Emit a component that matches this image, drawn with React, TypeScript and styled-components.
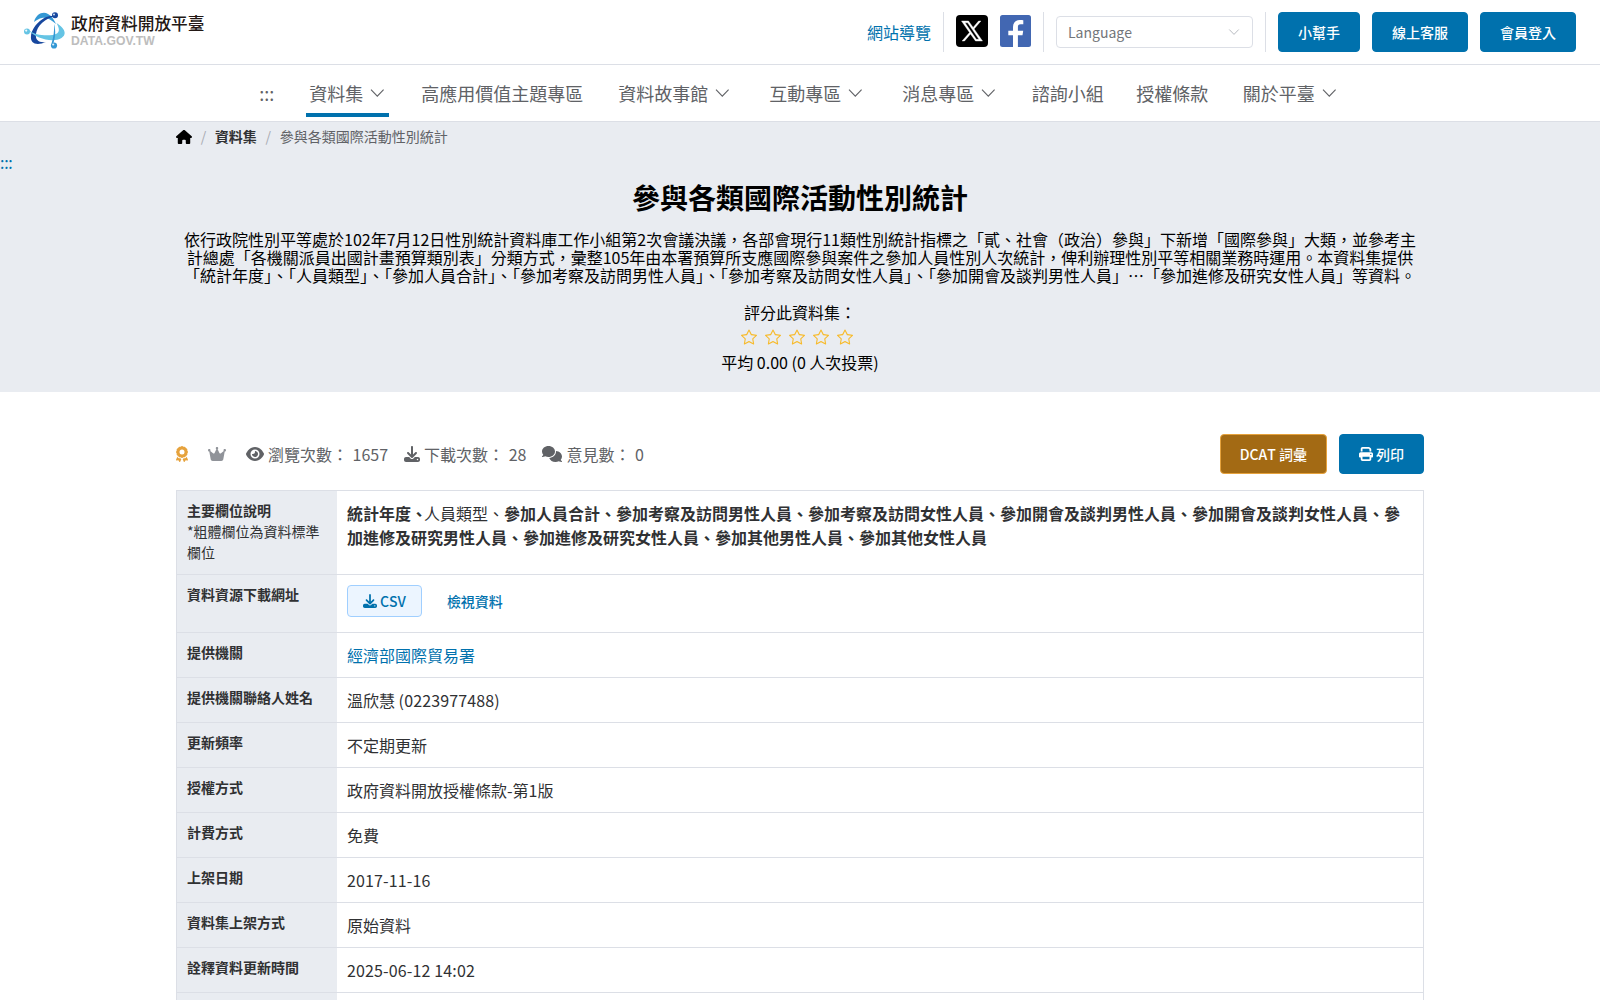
import React from "react";
import styled, { createGlobalStyle } from "styled-components";
import { FaAward, FaCrown, FaEye, FaDownload, FaComments, FaPrint, FaHouse } from "react-icons/fa6";
import { BsStar } from "react-icons/bs";

const Global = createGlobalStyle`
  * { box-sizing: border-box; }
  body { margin: 0; background: #fff; color: #303133; font: 16px/1.5 "Noto Sans CJK TC", sans-serif; font-kerning: none; overflow: hidden; }
  #root { height: 1000px; overflow: hidden; }
  a { color: #0071ad; text-decoration: none; }
`;

const TopBar = styled.header`
  display: flex; justify-content: space-between; align-items: center;
  height: 65px; padding: 0 24px; border-bottom: 1px solid #dcdfe6;
`;
const Brand = styled.a`display: flex; align-items: center; gap: 6px; padding-bottom: 2px;`;
const BrandText = styled.span`display: flex; flex-direction: column; padding-bottom: 1px;`;
const BrandName = styled.span`font-size: 16.7px; line-height: 20px; font-weight: 500; color: #231815;`;
const BrandHost = styled.span`font: bold 12.2px/16px "Liberation Sans", Arial, sans-serif; font-kerning: normal; color: #bdbdbd;`;
const Tools = styled.div`display: flex; align-items: center; gap: 12px;`;
const Divider = styled.i`width: 1px; height: 40px; background: #dcdfe6;`;
const SiteMap = styled.a`font-size: 16px;`;
const Social = styled.div`display: flex; align-items: center; gap: 12px; padding-bottom: 2px; svg { display: block; }`;
const Select = styled.div`
  display: flex; align-items: center; justify-content: space-between; width: 197px; height: 32px;
  padding: 0 12px 0 11px; border: 1px solid #dcdfe6; border-radius: 4px; font-size: 14px; color: #73767a;
`;
const Button = styled.button<{ $tone?: "brown" | "blue" }>`
  display: inline-flex; align-items: center; gap: 3px; height: 40px; padding: 0 19px;
  font: 500 14px/1 "Noto Sans CJK TC", sans-serif; font-kerning: none; color: #fff; border-radius: 4px;
  background: ${p => (p.$tone === "brown" ? "#a36a14" : "#0071ad")};
  border: 1px solid ${p => (p.$tone === "brown" ? "#e6a23c" : "#0071ad")};
`;

const Nav = styled.nav`
  display: flex; justify-content: center; height: 57px; padding-right: 3px; border-bottom: 1px solid #dcdfe6;
`;
const NavItem = styled.a<{ $active?: boolean; $left?: number }>`
  display: flex; align-items: center; gap: 7px; height: 52px; padding: 9px 3px 0; margin-left: ${p => p.$left ?? 0}px;
  font-size: 18px; line-height: 27px; color: #606266; border-bottom: 4px solid ${p => (p.$active ? "#0071ad" : "transparent")};
`;

const Hero = styled.section`height: 270px; background: #e9ecf1; color: #000; text-align: center;`;
const Container = styled.div`width: 1248px; margin: 0 auto;`;
const Crumbs = styled(Container)`display: flex; align-items: center; height: 29px; font-size: 14px; color: #606266;`;
const Slash = styled.span`margin: 0 8.7px; color: #a8abb2;`;
const CrumbLink = styled.b`color: #303133;`;
const Anchor = styled.a`display: block; height: 24px; line-height: 22px; text-align: left; letter-spacing: -0.3px;`;
const Title = styled.h1`margin: 4px 0 15px; font-size: 28px; line-height: 36px; font-weight: 700;`;
const Description = styled.p`width: 1248px; margin: 0 auto; padding: 0 8px; font-size: 16px; line-height: 18px;`;
const RateLabel = styled.div`margin-top: 16px; line-height: 24px;`;
const Stars = styled.div`display: flex; justify-content: center; gap: 8px; height: 26px; align-items: center; padding: 0 6px 1px 0; color: #f7ba2a;`;

const Meta = styled(Container)`display: flex; justify-content: space-between; align-items: center; padding: 42px 0 16px;`;
const Stats = styled.div`display: flex; align-items: center; gap: 16px; color: #606266;`;
const Stat = styled.span`display: inline-flex; align-items: center; gap: 4px; white-space: pre; word-spacing: 1px;`;
const StatIcon = styled.span<{ $width: number }>`display: flex; svg { width: ${p => p.$width}px; height: 16px; }`;
const Badge = styled(StatIcon)<{ $color: string }>`color: ${p => p.$color}; margin-right: 4px;`;
const Actions = styled.div`display: flex; gap: 12px;`;

const Table = styled(Container)`border: 1px solid #dcdfe6; border-bottom: 0;`;
const Row = styled.div`display: flex; border-bottom: 1px solid #dcdfe6;`;
const Label = styled.div`flex: 0 0 160px; padding: 9px 10px 11px; background: #e9ecf1; font-size: 14px; line-height: 21px;`;
const Value = styled.div`flex: 1; padding: 10px; line-height: 24px;`;
const Latin = styled.span`letter-spacing: 0.14px;`;
const LeadField = styled.b`margin-right: -3px;`;
const Files = styled.div`display: flex; gap: 10px; margin-bottom: 5px;`;
const FileButton = styled.a<{ $plain?: boolean }>`
  display: inline-flex; align-items: center; gap: 3px; height: 32px; padding: 0 15px 1px; font-size: 14px; font-weight: 500;
  border-radius: 4px; ${p => (p.$plain ? "" : "border: 1px solid #a0cfff; background: #ecf5ff;")}
`;

const Chevron = ({ size = 16, color = "#606266" }: { size?: number; color?: string }) => (
  <svg width={size} height={size} viewBox="0 0 16 16" fill="none" stroke={color} strokeWidth="1.1">
    <path d={size === 16 ? "M1 3.700 7.300 10.200 13.600 3.700" : "M1.700 4.700 8 11.200 14.300 4.700"} />
  </svg>
);

const Logo = () => (
  <svg width="41" height="38" viewBox="0 0 41 38">
    <path d="M10 10C12 2 19-1 24 2c4 2 6 6 8 10-5-4-9-7-14-6-3 .5-5 2-8 4Z" fill="#3498d4" />
    <path d="M32 4C20 2 8 14 7 24c-1 8 6 10 15 6-7 1-11-2-10-8C13 14 21 6 32 4Z" fill="#17479e" />
    <path d="M4.500 20c6 5 16 6 24 5 7-1 8-5 4-12 8 5 11 11 5 15-8 5-26 1-33-8Z" fill="#65c4e4" transform="translate(0 -2)" />
    <path d="M30 12c2 7 1.500 14-1 20l-1.500-.5c2-6 3-13 2.500-19.500Z" fill="#3498d4" />
    <circle cx="31" cy="3.200" r="3" fill="#17479e" />
    <circle cx="3" cy="19.500" r="3" fill="#65c4e4" />
    <circle cx="30" cy="33.500" r="3.100" fill="#3498d4" />
    <circle cx="30" cy="2.400" r="1" fill="#cfe0f5" />
    <circle cx="2.200" cy="18.600" r="1.100" fill="#eefaff" />
    <circle cx="29.200" cy="32.500" r="1.100" fill="#dff2ff" />
  </svg>
);

const XLogo = () => (
  <svg width="32" height="32" viewBox="0 0 32 32">
    <rect width="32" height="32" rx="4" fill="#000" />
    <path d="M5.500 6h7l4.600 6.400L22.600 6h2.300l-6.800 7.900L26.500 26h-7l-5-7L8.500 26H6.100l7.400-8.500ZM9 7.800 20.300 24.300h2.700L11.700 7.800Z" fill="#fff" stroke="#fff" strokeWidth=".4" fillRule="evenodd" />
  </svg>
);

const FacebookLogo = () => (
  <svg width="31" height="32" viewBox="0 0 31 32">
    <rect width="31" height="32" rx="2.500" fill="#4267b2" />
    <path d="M13 32V20.300H8.300v-4.500H13V12c0-4.500 2.700-7 6.700-7 1.500 0 2.600.1 3.600.2v4.100h-2.600c-2.300 0-2.800 1.200-2.800 2.800v3.700h5.300l-.7 4.500h-4.600V32Z" fill="#fff" />
  </svg>
);

const navItems = [
  { text: "資料集", arrow: true, left: 29, active: true },
  { text: "高應用價值主題專區", left: 29 },
  { text: "資料故事館", arrow: true, left: 29 },
  { text: "互動專區", arrow: true, left: 32 },
  { text: "消息專區", arrow: true, left: 32 },
  { text: "諮詢小組", left: 28.5 },
  { text: "授權條款", left: 26.5 },
  { text: "關於平臺", arrow: true, left: 28.5 },
];

const rows: [string, React.ReactNode][] = [
  ["提供機關", <a key="o">經濟部國際貿易署</a>],
  ["提供機關聯絡人姓名", <>溫欣慧 <Latin>(0223977488)</Latin></>],
  ["更新頻率", "不定期更新"],
  ["授權方式", "政府資料開放授權條款-第1版"],
  ["計費方式", "免費"],
  ["上架日期", <Latin key="d">2017-11-16</Latin>],
  ["資料集上架方式", "原始資料"],
  ["詮釋資料更新時間", <Latin key="t">2025-06-12 14:02</Latin>],
  ["", ""],
];

export default function App() {
  return (
    <>
      <Global />
      <TopBar>
        <Brand>
          <Logo />
          <BrandText>
            <BrandName>政府資料開放平臺</BrandName>
            <BrandHost>DATA.GOV.TW</BrandHost>
          </BrandText>
        </Brand>
        <Tools>
          <SiteMap>網站導覽</SiteMap>
          <Divider />
          <Social><XLogo /><FacebookLogo /></Social>
          <Divider />
          <Select>Language<Chevron size={12} color="#a8abb2" /></Select>
          <Divider />
          <Button>小幫手</Button>
          <Button>線上客服</Button>
          <Button>會員登入</Button>
        </Tools>
      </TopBar>
      <Nav>
        <NavItem>:::</NavItem>
        {navItems.map(n => (
          <NavItem key={n.text} $active={n.active} $left={n.left}>
            {n.text}
            {n.arrow && <Chevron />}
          </NavItem>
        ))}
      </Nav>
      <Hero>
        <Crumbs>
          <FaHouse size={16} color="#000" />
          <Slash>/</Slash>
          <CrumbLink>資料集</CrumbLink>
          <Slash>/</Slash>
          參與各類國際活動性別統計
        </Crumbs>
        <Anchor>:::</Anchor>
        <Title>參與各類國際活動性別統計</Title>
        <Description>
          依行政院性別平等處於102年7月12日性別統計資料庫工作小組第2次會議決議，各部會現行11類性別統計指標之「貳、社會（政治）參與」下新增「國際參與」大類，並參考主計總處「各機關派員出國計畫預算類別表」分類方式，彙整105年由本署預算所支應國際參與案件之參加人員性別人次統計，俾利辦理性別平等相關業務時運用。本資料集提供「統計年度」、「人員類型」、「參加人員合計」、「參加考察及訪問男性人員」、「參加考察及訪問女性人員」、「參加開會及談判男性人員」…「參加進修及研究女性人員」等資料。
        </Description>
        <RateLabel>評分此資料集：</RateLabel>
        <Stars>{[1, 2, 3, 4, 5].map(i => <BsStar key={i} size={16} />)}</Stars>
        <div>平均 0.00 (0 人次投票)</div>
      </Hero>
      <Meta>
        <Stats>
          <Badge $color="#e6a23c" $width={12}><FaAward /></Badge>
          <Badge $color="#909399" $width={18}><FaCrown /></Badge>
          <Stat><StatIcon $width={18}><FaEye /></StatIcon>瀏覽次數： 1657</Stat>
          <Stat><StatIcon $width={16}><FaDownload /></StatIcon>下載次數： 28</Stat>
          <Stat><StatIcon $width={20}><FaComments /></StatIcon>意見數： 0</Stat>
        </Stats>
        <Actions>
          <Button $tone="brown">DCAT 詞彙</Button>
          <Button><FaPrint size={14} />列印</Button>
        </Actions>
      </Meta>
      <Table>
        <Row>
          <Label><b>主要欄位說明</b><br />*粗體欄位為資料標準欄位</Label>
          <Value>
            <LeadField>統計年度、</LeadField>人員類型、<b>參加人員合計、參加考察及訪問男性人員、參加考察及訪問女性人員、參加開會及談判男性人員、參加開會及談判女性人員、參加進修及研究男性人員、參加進修及研究女性人員、參加其他男性人員、參加其他女性人員</b>
          </Value>
        </Row>
        <Row>
          <Label><b>資料資源下載網址</b></Label>
          <Value>
            <Files>
              <FileButton><FaDownload size={14} />CSV</FileButton>
              <FileButton $plain>檢視資料</FileButton>
            </Files>
          </Value>
        </Row>
        {rows.map(([label, value], i) => (
          <Row key={i}>
            <Label><b>{label}</b></Label>
            <Value>{value}</Value>
          </Row>
        ))}
      </Table>
    </>
  );
}
